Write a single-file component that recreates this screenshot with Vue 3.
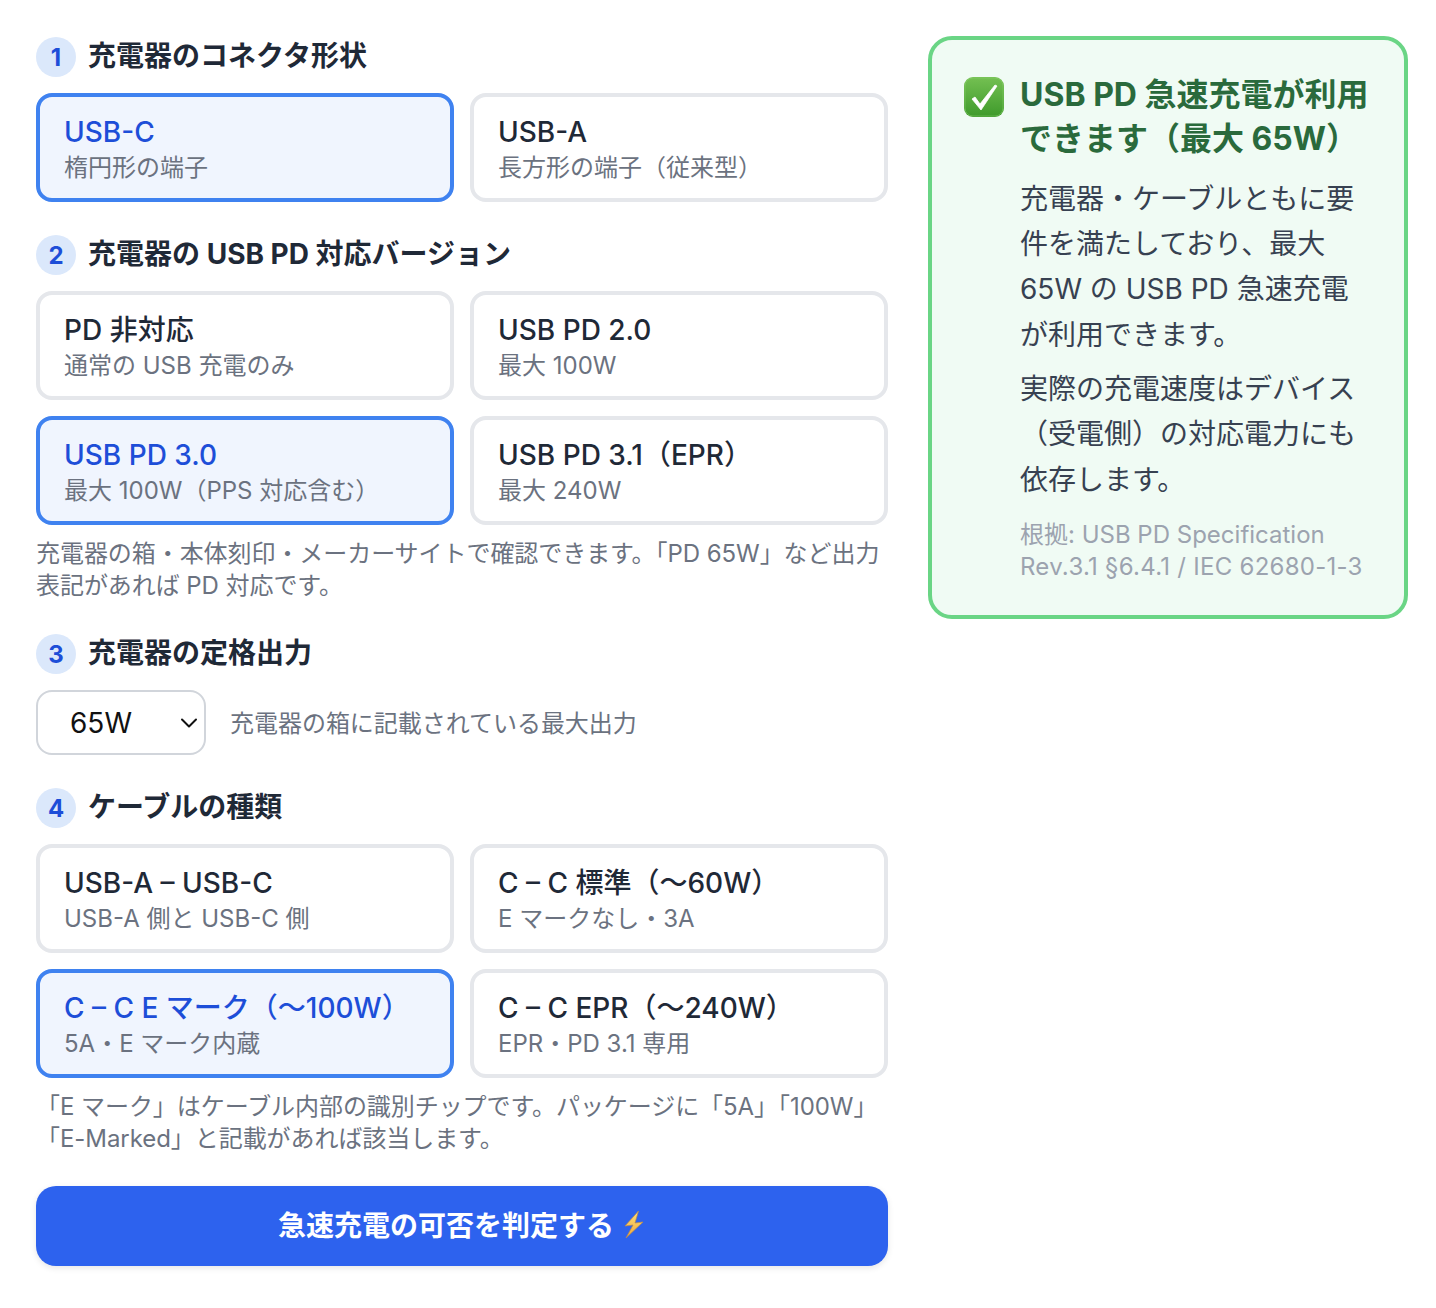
<script setup>
import { ref } from 'vue'

const connector = ref('c')
const pdVersion = ref('pd30')
const watt = ref('65W')
const cable = ref('emark')

const connectors = [
  { id: 'c', title: 'USB-C', sub: '楕円形の端子' },
  { id: 'a', title: 'USB-A', sub: '長方形の端子（従来型）' }
]
const versions = [
  { id: 'none', title: 'PD 非対応', sub: '通常の USB 充電のみ' },
  { id: 'pd20', title: 'USB PD 2.0', sub: '最大 100W' },
  { id: 'pd30', title: 'USB PD 3.0', sub: '最大 100W（PPS 対応含む）' },
  { id: 'pd31', title: 'USB PD 3.1（EPR）', sub: '最大 240W' }
]
const watts = ['18W', '30W', '45W', '65W', '100W', '140W', '240W']
const cables = [
  { id: 'ac', title: 'USB-A – USB-C', sub: 'USB-A 側と USB-C 側' },
  { id: 'std', title: 'C – C 標準（〜60W）', sub: 'E マークなし・3A' },
  { id: 'emark', title: 'C – C E マーク（〜100W）', sub: '5A・E マーク内蔵' },
  { id: 'epr', title: 'C – C EPR（〜240W）', sub: 'EPR・PD 3.1 専用' }
]
</script>

<template>
  <div class="page">
    <div class="form">
      <section class="step">
        <h2 class="step-head"><span class="badge">1</span><span class="step-title">充電器のコネクタ形状</span></h2>
        <div class="options">
          <button
            v-for="o in connectors"
            :key="o.id"
            :class="['option', { selected: connector === o.id }]"
            @click="connector = o.id"
          >
            <span class="option-title">{{ o.title }}</span>
            <span class="option-sub">{{ o.sub }}</span>
          </button>
        </div>
      </section>

      <section class="step">
        <h2 class="step-head"><span class="badge">2</span><span class="step-title">充電器の USB PD 対応バージョン</span></h2>
        <div class="options">
          <button
            v-for="o in versions"
            :key="o.id"
            :class="['option', { selected: pdVersion === o.id }]"
            @click="pdVersion = o.id"
          >
            <span class="option-title">{{ o.title }}</span>
            <span class="option-sub">{{ o.sub }}</span>
          </button>
        </div>
        <p class="note">充電器の箱・本体刻印・メーカーサイトで確認できます。「PD 65W」など出力表記があれば PD 対応です。</p>
      </section>

      <section class="step">
        <h2 class="step-head"><span class="badge">3</span><span class="step-title">充電器の定格出力</span></h2>
        <div class="watt-row">
          <div class="select-wrap">
            <select v-model="watt" class="watt-select">
              <option v-for="w in watts" :key="w" :value="w">{{ w }}</option>
            </select>
            <svg class="chevron" viewBox="0 0 18 10" width="18" height="10" fill="none">
              <path d="M2 1.5 9 8.500 16 1.500" stroke="#111" stroke-width="2" stroke-linecap="round" stroke-linejoin="round" />
            </svg>
          </div>
          <span class="watt-hint">充電器の箱に記載されている最大出力</span>
        </div>
      </section>

      <section class="step">
        <h2 class="step-head"><span class="badge">4</span><span class="step-title">ケーブルの種類</span></h2>
        <div class="options">
          <button
            v-for="o in cables"
            :key="o.id"
            :class="['option', { selected: cable === o.id }]"
            @click="cable = o.id"
          >
            <span class="option-title">{{ o.title }}</span>
            <span class="option-sub">{{ o.sub }}</span>
          </button>
        </div>
        <p class="note">「E マーク」はケーブル内部の識別チップです。パッケージに「5A」「100W」「E-Marked」と記載があれば該当します。</p>
      </section>

      <button class="submit">
        急速充電の可否を判定する
        <svg class="bolt" viewBox="0 0 24 30" width="24" height="30">
          <defs>
            <linearGradient id="boltFill" x1="0" y1="0" x2="0" y2="1">
              <stop offset="0" stop-color="#ffe27a" />
              <stop offset="1" stop-color="#f0a63a" />
            </linearGradient>
          </defs>
          <path d="M16.500 2 3 17l8-1L4 29l17-16-8 1z" fill="url(#boltFill)" stroke="#b98a4a" stroke-width="0.7" stroke-linejoin="round" />
        </svg>
      </button>
    </div>

    <aside class="result">
      <div class="result-head">
        <svg class="check" viewBox="0 0 40 40" width="40" height="40">
          <defs>
            <linearGradient id="checkBg" x1="0" y1="0" x2="0" y2="1">
              <stop offset="0" stop-color="#74c052" />
              <stop offset="1" stop-color="#3e9a2b" />
            </linearGradient>
          </defs>
          <rect width="40" height="40" rx="9" fill="url(#checkBg)" />
          <rect x="1" y="1" width="38" height="38" rx="8" fill="none" stroke="#8ad06c" stroke-opacity="0.5" />
          <path d="M8 22 11 20 16 27 31 8 33 9 17 33z" fill="#fff" stroke="#fff" stroke-width="0.8" stroke-linejoin="round" />
        </svg>
        <h3 class="result-title">USB PD 急速充電が利用できます（最大 65W）</h3>
      </div>
      <div class="result-body">
        <p>充電器・ケーブルともに要件を満たしており、最大 65W の USB PD 急速充電が利用できます。</p>
        <p>実際の充電速度はデバイス（受電側）の対応電力にも依存します。</p>
        <p class="source">根拠: USB PD Specification <span class="source-ref">Rev.3.1 §6.4.1 / IEC 62680-1-3</span></p>
      </div>
    </aside>
  </div>
</template>

<style scoped>
.page {
  display: flex;
  align-items: flex-start;
  gap: 40px;
  padding: 36px 28px 40px 36px;
  font-family: Inter, "Noto Sans CJK JP", sans-serif;
  color: #1f2937;
}

.form {
  width: 852px;
  flex-shrink: 0;
}

.step {
  margin-bottom: 33px;
}

.step-head {
  display: flex;
  align-items: center;
  gap: 12px;
  margin: 1px 0 16px;
  font-size: 28px;
  font-weight: 700;
  line-height: 40px;
  color: #1f2937;
}

.step-title {
  padding-bottom: 2px;
  line-height: 38px;
}

.badge {
  box-sizing: border-box;
  width: 40px;
  height: 40px;
  padding-top: 2px;
  border-radius: 50%;
  background: #dbe8fb;
  color: #1d4ed8;
  font-size: 24px;
  display: flex;
  align-items: center;
  justify-content: center;
  flex-shrink: 0;
}

.options {
  display: grid;
  grid-template-columns: 1fr 1fr;
  gap: 16px;
}

.option {
  display: flex;
  flex-direction: column;
  align-items: flex-start;
  height: 109px;
  padding: 16px 24px;
  border: 4px solid #e5e7eb;
  border-radius: 16px;
  background: #fff;
  font-family: inherit;
  text-align: left;
  cursor: pointer;
}

.option.selected {
  border-color: #3f82f0;
  background: #f0f5fe;
}

.option-title {
  font-size: 28px;
  font-weight: 500;
  line-height: 38px;
  color: #1f2937;
}

.option.selected .option-title {
  color: #1d4ed8;
}

.option-sub {
  font-size: 24px;
  line-height: 34px;
  color: #6b7280;
}

.note {
  margin: 13px 0 -1px;
  font-size: 24px;
  line-height: 32px;
  letter-spacing: -0.06px;
  color: #6b7280;
}

.watt-row {
  display: flex;
  align-items: center;
  gap: 24px;
}

.select-wrap {
  position: relative;
  width: 170px;
  height: 65px;
}

.watt-select {
  appearance: none;
  width: 100%;
  height: 100%;
  padding: 0 32px;
  border: 2px solid #d1d5db;
  border-radius: 16px;
  background: #fff;
  font-family: inherit;
  font-size: 28px;
  color: #111;
}

.chevron {
  position: absolute;
  right: 8px;
  top: 28px;
  pointer-events: none;
}

.watt-hint {
  padding-bottom: 2px;
  font-size: 24px;
  letter-spacing: -0.03px;
  color: #6b7280;
}

.submit {
  display: flex;
  align-items: center;
  justify-content: center;
  gap: 8px;
  width: 100%;
  height: 80px;
  margin-top: -2px;
  padding: 0 0 5px;
  border: none;
  border-radius: 20px;
  background: #2d62ee;
  box-shadow: 0 2px 6px rgba(0, 0, 0, 0.1);
  color: #fff;
  font-family: inherit;
  font-size: 28px;
  font-weight: 700;
  cursor: pointer;
}

.result {
  width: 480px;
  box-sizing: border-box;
  flex-shrink: 0;
  padding: 32px;
  border: 4px solid #6ad585;
  border-radius: 24px;
  background: #f0fbf4;
}

.result-head {
  display: flex;
  align-items: flex-start;
  gap: 16px;
}

.check {
  flex-shrink: 0;
  margin-top: 5px;
}

.result-title {
  margin: 1px 0 0;
  font-size: 32px;
  font-weight: 700;
  line-height: 44px;
  color: #2a6a3c;
}

.result-body {
  margin: 15.6px 0 0 56px;
}

.result-body p {
  margin: 0 0 8.6px;
  font-size: 28px;
  line-height: 45.4px;
  color: #374151;
}

.result-body .source {
  margin: 16.4px 0 0;
  font-size: 24px;
  line-height: 32px;
  color: #9ca3af;
}

.source-ref {
  white-space: nowrap;
  letter-spacing: 0.27px;
}
</style>

<style>
body {
  background: #fff;
}
</style>
